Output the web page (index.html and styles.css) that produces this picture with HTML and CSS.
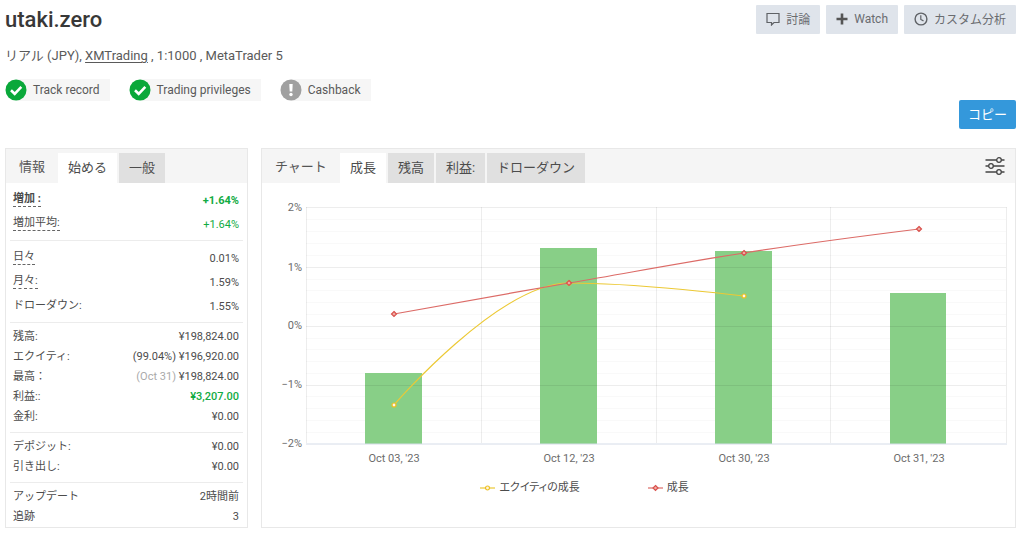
FILE: index.html
```html
<!DOCTYPE html>
<html lang="ja">
<head>
<meta charset="utf-8">
<title>utaki.zero</title>
<link rel="stylesheet" href="styles.css">
</head>
<body>
<main class="page">
  <header class="head">
    <div class="identity">
      <h1 class="name">utaki.zero</h1>
      <p class="meta">リアル (JPY), <a href="#">XMTrading</a> , 1:1000 , MetaTrader 5</p>
      <ul class="badges">
        <li class="badge">
          <svg class="badge-icon" viewBox="0 0 22 22" aria-hidden="true"><circle cx="11" cy="11" r="10.5" fill="#0aa83a"/><path d="M6 11.300l3.700 3.500 6.600-6.900" fill="none" stroke="#fff" stroke-width="2.600"/></svg>
          <span class="badge-text">Track record</span>
        </li>
        <li class="badge">
          <svg class="badge-icon" viewBox="0 0 22 22" aria-hidden="true"><circle cx="11" cy="11" r="10.5" fill="#0aa83a"/><path d="M6 11.300l3.700 3.500 6.600-6.900" fill="none" stroke="#fff" stroke-width="2.600"/></svg>
          <span class="badge-text">Trading privileges</span>
        </li>
        <li class="badge">
          <svg class="badge-icon" viewBox="0 0 22 22" aria-hidden="true"><circle cx="11" cy="11" r="10.5" fill="#a0a0a0"/><path d="M9.300 5h3.400l-.4 7.500h-2.600z" fill="#fff"/><circle cx="11" cy="15.500" r="1.700" fill="#fff"/></svg>
          <span class="badge-text">Cashback</span>
        </li>
      </ul>
    </div>
    <div class="actions">
      <div class="toolbar">
        <button class="btn" type="button">
          <svg class="btn-icon" viewBox="0 0 14 14" aria-hidden="true"><path d="M1 1.500h12v9H8L5.500 13v-2.500H1z" fill="none" stroke="#5f6266" stroke-width="1.200"/></svg>
          討論
        </button>
        <button class="btn" type="button">
          <svg class="btn-icon plus" viewBox="0 0 12 12" aria-hidden="true"><path d="M6 .5v11M.5 6h11" stroke="#555" stroke-width="2.600"/></svg>
          Watch
        </button>
        <button class="btn" type="button">
          <svg class="btn-icon" viewBox="0 0 14 14" aria-hidden="true"><circle cx="7" cy="7" r="5.900" fill="none" stroke="#5f6266" stroke-width="1.400"/><path d="M6.800 3.200v4.300l2.700 1.400" fill="none" stroke="#5f6266" stroke-width="1.200"/></svg>
          カスタム分析
        </button>
      </div>
      <button class="btn copy" type="button">コピー</button>
    </div>
  </header>

  <div class="panels">
    <section class="panel info">
      <div class="tabs">
        <h2 class="tab-title">情報</h2>
        <button class="tab active" type="button">始める</button>
        <button class="tab" type="button">一般</button>
      </div>
      <div class="stats">
        <dl class="group roomy">
          <div class="row"><dt><b class="hint">増加 :</b></dt><dd class="up"><b>+1.64%</b></dd></div>
          <div class="row"><dt><span class="hint">増加平均:</span></dt><dd class="up">+1.64%</dd></div>
        </dl>
        <dl class="group roomy">
          <div class="row"><dt><span class="hint">日々</span></dt><dd>0.01%</dd></div>
          <div class="row"><dt><span class="hint">月々:</span></dt><dd>1.59%</dd></div>
          <div class="row"><dt>ドローダウン:</dt><dd>1.55%</dd></div>
        </dl>
        <dl class="group">
          <div class="row"><dt>残高:</dt><dd>¥198,824.00</dd></div>
          <div class="row"><dt>エクイティ:</dt><dd>(99.04%) ¥196,920.00</dd></div>
          <div class="row"><dt>最高：</dt><dd><span class="dim">(Oct 31)</span> ¥198,824.00</dd></div>
          <div class="row"><dt>利益::</dt><dd class="up strong">¥3,207.00</dd></div>
          <div class="row"><dt>金利:</dt><dd>¥0.00</dd></div>
        </dl>
        <dl class="group">
          <div class="row"><dt>デポジット:</dt><dd>¥0.00</dd></div>
          <div class="row"><dt>引き出し:</dt><dd>¥0.00</dd></div>
        </dl>
        <dl class="group">
          <div class="row"><dt>アップデート</dt><dd>2時間前</dd></div>
          <div class="row"><dt>追跡</dt><dd>3</dd></div>
        </dl>
      </div>
    </section>

    <section class="panel chart">
      <div class="tabs">
        <h2 class="tab-title">チャート</h2>
        <button class="tab active" type="button">成長</button>
        <button class="tab" type="button">残高</button>
        <button class="tab" type="button">利益:</button>
        <button class="tab" type="button">ドローダウン</button>
        <button class="settings" type="button" aria-label="設定">
          <svg viewBox="0 0 20 18" aria-hidden="true"><g fill="none" stroke="#444" stroke-width="1.300"><path d="M.5 3h11.200M16.300 3h3.200M.5 9h3.200M8.300 9h11.200M.5 15h11.200M16.300 15h3.200"/><circle cx="14" cy="3" r="2.300"/><circle cx="6" cy="9" r="2.300"/><circle cx="14" cy="15" r="2.300"/></g></svg>
        </button>
      </div>
      <svg class="plot" viewBox="0 0 753 290" role="img" aria-label="成長">
        <path class="minor" d="M44 36.500H744M44 48.500H744M44 60.500H744M44 72.500H744M44 96.500H744M44 107.500H744M44 119.500H744M44 131.500H744M44 155.500H744M44 166.500H744M44 178.500H744M44 190.500H744M44 213.500H744M44 225.500H744M44 237.500H744M44 249.500H744"/>
        <g class="bars">
          <rect x="103" y="190" width="57" height="71"/>
          <rect x="278" y="65" width="57" height="196"/>
          <rect x="453" y="68" width="57" height="193"/>
          <rect x="628" y="110" width="56" height="151"/>
        </g>
        <path class="grid" d="M44 24.500H744.500M44 84.500H744M44 143.500H744M44 202.500H744M44.500 24V260M219.500 24V260M394.500 24V260M568.500 24V260M744.500 24V260"/>
        <path class="axis" d="M44 261H745"/>
        <path class="line equity" d="M132 222C132 222 237 100 307 100S482 113 482 113"/>
        <g class="equity mark"><circle cx="132" cy="222" r="2"/><circle cx="307" cy="100" r="2"/><circle cx="482" cy="113" r="2"/></g>
        <path class="line growth" d="M132 131C132 131 237 112 307 100S412 81 482 70S657 46 657 46"/>
        <path class="growth mark" d="M132 128.500l2.500 2.500-2.500 2.500-2.500-2.500zM307 97.500l2.500 2.500-2.500 2.500-2.500-2.500zM482 67.500l2.500 2.500-2.500 2.500-2.500-2.500zM657 43.500l2.500 2.500-2.500 2.500-2.500-2.500z"/>
        <g class="label y">
          <text x="40" y="28">2%</text><text x="40" y="88">1%</text><text x="40" y="146">0%</text><text x="40" y="205">−1%</text><text x="40" y="264">−2%</text>
        </g>
        <g class="label x">
          <text x="132" y="279">Oct 03, '23</text><text x="307" y="279">Oct 12, '23</text><text x="482" y="279">Oct 30, '23</text><text x="657" y="279">Oct 31, '23</text>
        </g>
      </svg>
      <ul class="legend">
        <li><svg viewBox="0 0 15 8" aria-hidden="true"><path class="line equity" d="M0 4h15"/><circle class="equity mark" cx="7.500" cy="4" r="2"/></svg>エクイティの成長</li>
        <li><svg viewBox="0 0 15 8" aria-hidden="true"><path class="line growth" d="M0 4h15"/><path class="growth mark" d="M7.500 1.500l2.500 2.500-2.500 2.500-2.500-2.500z"/></svg>成長</li>
      </ul>
    </section>
  </div>
</main>
</body>
</html>
```
FILE: styles.css
```css
* { box-sizing: border-box; }

body {
  margin: 0;
  background: #fff;
  color: #4c4c4c;
  font-family: Roboto, "Noto Sans CJK JP", sans-serif;
  font-size: 12px;
}

h1, h2, p, ul, dl, dd { margin: 0; padding: 0; }
ul { list-style: none; }
button { font: inherit; color: inherit; border: 0; cursor: pointer; }

.page { padding: 5px 8px 7px 5px; }

.head {
  display: flex;
  justify-content: space-between;
  min-height: 143px;
}

.name {
  font-size: 22px;
  line-height: 30px;
  font-weight: 500;
  color: #383838;
}

.meta {
  margin-top: 11px;
  font-size: 13px;
  line-height: 20px;
  color: #5a5a5a;
}
.meta a { color: inherit; text-underline-offset: 2px; }

.badges { display: flex; gap: 19px; margin-top: 13px; }
.badge { display: flex; align-items: center; height: 22px; background: linear-gradient(90deg, #fff 11px, #f6f6f6 11px); }
.badge-icon { width: 22px; height: 22px; }
.badge-text { padding: 0 10px 0 6px; color: #5a5a5a; }

.actions {
  display: flex;
  flex-direction: column;
  justify-content: space-between;
  align-items: flex-end;
  padding-bottom: 19px;
}
.toolbar { display: flex; gap: 6px; }
.btn {
  display: flex;
  align-items: center;
  gap: 6px;
  height: 29px;
  padding: 0 10px 2px;
  background: #dfe4eb;
  color: #6a6c70;
  border-radius: 1px;
  font-size: 12px;
}
.btn-icon { width: 14px; height: 14px; }
.btn-icon.plus { width: 12px; height: 12px; }
.copy { padding: 0 9px 2px; background: #3498db; color: #fff; font-size: 13px; border-radius: 2px; }

.panels { display: grid; grid-template-columns: 243px 1fr; gap: 13px; }
.panel { border: 1px solid #e8e8e8; }

.tabs {
  display: flex;
  gap: 2px;
  height: 34px;
  padding-top: 4px;
  background: #f5f5f5;
  font-size: 13px;
}
.tab-title {
  padding: 0 11px 0 13px;
  font-size: 13px;
  font-weight: 400;
  line-height: 28px;
  color: #555;
}
.tab { padding: 0 10px 3px; background: #e0e0e0; color: #4c4c4c; }
.tab.active { background: #fff; }

.settings { margin-left: auto; padding: 0 10px; height: 18px; margin-top: 4px; background: none; }
.settings svg { display: block; width: 20px; height: 18px; }

.stats { padding: 0 4px; }
.group { padding: 4px 4px 5px 3px; border-bottom: 1px solid #ececec; font-size: 11px; }
.group.roomy { padding-top: 5px; padding-bottom: 4px; }
.group:last-child { border-bottom: 0; padding-bottom: 0; }
.row { display: flex; justify-content: space-between; align-items: center; height: 20px; line-height: 16px; }
.roomy .row { height: 24px; }
.roomy dd { padding-top: 2px; }
.hint { display: block; line-height: 14px; border-bottom: 1px dashed #666; margin-bottom: 2px; }
.up { color: #12ab43; }
.strong { font-weight: 500; }
.dim { color: #aaa; }

.plot { display: block; width: 100%; height: auto; }
.plot path, .legend path { fill: none; }
.grid { stroke: #000; stroke-opacity: .07; }
.minor { stroke: #f9f9f9; }
.axis { stroke: #d5dce8; stroke-width: 1; }
.bars { fill: #88cf87; }
.line { stroke-width: 1.2; }
.line.growth { stroke: #dc6b67; }
.line.equity { stroke: #ecc935; }
.plot .mark, .legend .mark { fill: #fff3e8; stroke-width: 1.2; }
.plot .growth.mark, .legend .growth.mark { fill: #f0b0a8; stroke: #d9504c; }
.equity.mark { stroke: #ecc020; }
.label { font-size: 11px; fill: #6c6c6c; }
.label.y { text-anchor: end; }
.label.x { text-anchor: middle; }

.legend {
  display: flex;
  gap: 68px;
  padding-left: 29%;
  margin-top: 6px;
  font-size: 11px;
  line-height: 18px;
  font-feature-settings: "palt";
}
.legend li { display: flex; align-items: center; gap: 4px; }
.legend svg { width: 15px; height: 8px; }
```
